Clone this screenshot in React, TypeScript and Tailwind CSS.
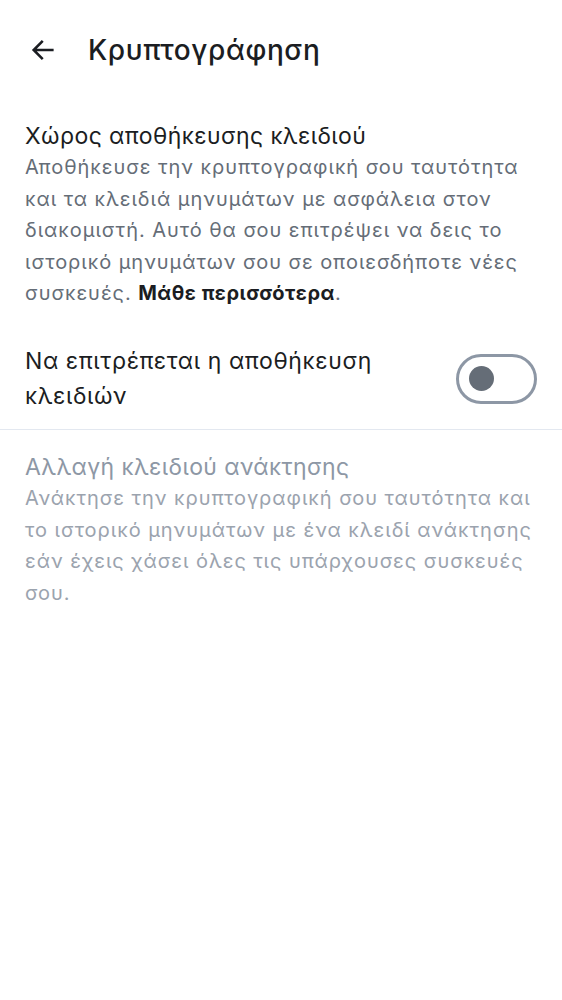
import { useState } from 'react';

function BackArrow() {
  return (
    <svg width="28" height="28" viewBox="0 0 24 24" fill="none" className="text-[#1b1d22]">
      <path d="M20 12H4.5M11 5l-7 7 7 7" stroke="currentColor" strokeWidth="2.2" strokeLinecap="square" />
    </svg>
  );
}

export default function App() {
  const [enabled, setEnabled] = useState(false);

  return (
    <div className="min-h-[1000px] bg-white font-['Inter','Noto_Sans',sans-serif] text-[#1b1d22]">
      {/* Header */}
      <div className="flex items-center h-[100px] pl-[29px] gap-[31px]">
        <BackArrow />
        <h1 className="text-[28px] font-medium tracking-[0.6px]">Κρυπτογράφηση</h1>
      </div>

      {/* Key storage */}
      <div className="px-[25px] pt-[20px]">
        <h2 className="text-[23px] leading-[32px] tracking-[0.4px]">Χώρος αποθήκευσης κλειδιού</h2>
        <p className="text-[20px] leading-[31.6px] tracking-[0.95px] text-[#656d77]">
          Αποθήκευσε την κρυπτογραφική σου ταυτότητα και τα κλειδιά μηνυμάτων με ασφάλεια στον
          διακομιστή. Αυτό θα σου επιτρέψει να δεις το ιστορικό μηνυμάτων σου σε οποιεσδήποτε νέες
          συσκευές. <span className="font-bold text-[#1b1d22] tracking-[0.5px]">Μάθε περισσότερα</span>.
        </p>
      </div>

      <div className="flex items-center justify-between px-[25px] pt-[34px] pb-[15px] border-b border-[#e3e8f0]">
        <span className="text-[23px] leading-[35px] tracking-[0.6px] max-w-[390px]">Να επιτρέπεται η αποθήκευση κλειδιών</span>
        <button
          onClick={() => setEnabled(!enabled)}
          className="w-[81px] h-[50px] rounded-full border-[3px] border-[#8d97a5] flex items-center px-[10px]"
        >
          <span className={`w-[25px] h-[25px] rounded-full bg-[#656d77] ${enabled ? 'ml-auto' : ''}`} />
        </button>
      </div>

      {/* Recovery key */}
      <div className="px-[25px] pt-[21px]">
        <h2 className="text-[23px] leading-[32px] tracking-[0.4px] text-[#8d97a5]">Αλλαγή κλειδιού ανάκτησης</h2>
        <p className="text-[20px] leading-[31.6px] tracking-[0.95px] text-[#9ba3ae]">
          Ανάκτησε την κρυπτογραφική σου ταυτότητα και το ιστορικό μηνυμάτων με ένα κλειδί ανάκτησης
          εάν έχεις χάσει όλες τις υπάρχουσες συσκευές σου.
        </p>
      </div>
    </div>
  );
}
